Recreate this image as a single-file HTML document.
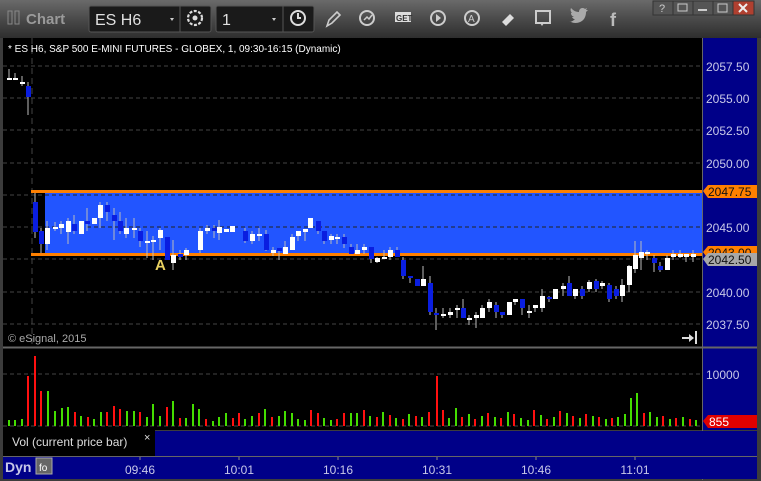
<!DOCTYPE html>
<html><head><meta charset="utf-8"><style>
body{margin:0;width:761px;height:481px;overflow:hidden;background:#3a3a3a;font-family:"Liberation Sans",sans-serif}
svg{display:block}
</style></head><body>
<svg width="761" height="481" xmlns="http://www.w3.org/2000/svg" font-family="Liberation Sans, sans-serif">
<defs><linearGradient id="tb" x1="0" y1="0" x2="0" y2="1"><stop offset="0" stop-color="#6a6a6a"/><stop offset="0.5" stop-color="#4a4a4a"/><stop offset="1" stop-color="#2e2e2e"/></linearGradient></defs>
<rect width="761" height="481" fill="#3c3c3c"/>
<rect x="0" y="0" width="761" height="38" fill="url(#tb)"/>
<rect x="8" y="11" width="4" height="13" fill="none" stroke="#888" stroke-width="1"/>
<rect x="15" y="11" width="4" height="13" fill="none" stroke="#888" stroke-width="1"/>
<text x="26" y="24" font-size="15" font-weight="bold" fill="#9a9a9a">Chart</text>
<rect x="89" y="6" width="122" height="26" rx="2" fill="#1a1a1a" stroke="#555"/>
<line x1="180" y1="6" x2="180" y2="32" stroke="#555"/>
<text x="95" y="25" font-size="16" fill="#e0e0e0">ES H6</text>
<path d="M170 18 l4 0 -2 3z" fill="#ccc"/>
<circle cx="195" cy="18" r="7" fill="none" stroke="#ddd" stroke-width="2.2" stroke-dasharray="3 1.5"/><circle cx="195" cy="18" r="2.5" fill="#ddd"/>
<rect x="216" y="6" width="98" height="26" rx="2" fill="#1a1a1a" stroke="#555"/>
<line x1="283" y1="6" x2="283" y2="32" stroke="#555"/>
<text x="222" y="25" font-size="16" fill="#e0e0e0">1</text>
<path d="M272 18 l4 0 -2 3z" fill="#ccc"/>
<circle cx="298" cy="18" r="7" fill="none" stroke="#ddd" stroke-width="2"/><path d="M298 13v5h3" stroke="#ddd" stroke-width="2" fill="none"/>
<path d="M327 26 l2-6 8-8 3 3 -8 8z" fill="none" stroke="#ccc" stroke-width="1.6"/>
<circle cx="367" cy="18" r="7" fill="none" stroke="#ccc" stroke-width="2"/><path d="M364 20l3-3 2 2 3-4" stroke="#ccc" stroke-width="1.5" fill="none"/>
<rect x="395" y="12" width="16" height="10" fill="#ddd"/><text x="396" y="21" font-size="8" font-weight="bold" fill="#333">GET</text>
<circle cx="438" cy="18" r="7" fill="none" stroke="#ccc" stroke-width="2"/><path d="M436 14v8l5-4z" fill="#ccc"/>
<circle cx="472" cy="18" r="7" fill="none" stroke="#ccc" stroke-width="2"/><text x="468" y="22" font-size="10" fill="#ccc">A</text>
<path d="M502 22 l8-8 4 4 -8 8z" fill="#ddd"/>
<rect x="536" y="11" width="14" height="12" fill="none" stroke="#ccc" stroke-width="2"/><path d="M540 23l2 3 2-3z" fill="#ccc"/>
<path d="M571 22c4 2 10 1 13-3 2-3 2-6 2-7l2-2-2 0 1-2-2 1c-2-2-6-1-6 3-4 0-6-2-8-4-1 2 0 4 1 5h-1c0 2 1 3 3 4h-2c1 2 2 2 3 2-2 2-4 3-6 3z" fill="#aaa"/>
<text x="610" y="26" font-size="18" font-weight="bold" fill="#bbb">f</text>
<rect x="653" y="1" width="20" height="14" fill="#555" stroke="#333"/><text x="659" y="12" font-size="11" fill="#ccc">?</text>
<rect x="673" y="1" width="20" height="14" fill="#555" stroke="#333"/><rect x="678" y="4" width="9" height="7" fill="none" stroke="#ccc"/>
<rect x="693" y="1" width="20" height="14" fill="#555" stroke="#333"/><rect x="698" y="9" width="9" height="2" fill="#ccc"/>
<rect x="713" y="1" width="20" height="14" fill="#555" stroke="#333"/><rect x="718" y="4" width="9" height="8" fill="none" stroke="#ccc"/>
<rect x="733" y="1" width="21" height="14" fill="#b04030" stroke="#333"/><path d="M739 4l8 8M747 4l-8 8" stroke="#eee" stroke-width="2"/>
<rect x="3" y="38" width="699" height="309" fill="#000"/>
<rect x="703" y="38" width="54" height="309" fill="#000088"/>
<line x1="702.5" y1="38" x2="702.5" y2="480" stroke="#666"/>
<g stroke="#444" stroke-dasharray="4 3">
<line x1="3" y1="66" x2="702" y2="66"/><line x1="3" y1="98" x2="702" y2="98"/><line x1="3" y1="130" x2="702" y2="130"/><line x1="3" y1="163" x2="702" y2="163"/><line x1="3" y1="195" x2="702" y2="195"/><line x1="3" y1="227" x2="702" y2="227"/><line x1="3" y1="259" x2="702" y2="259"/><line x1="3" y1="292" x2="702" y2="292"/><line x1="3" y1="324" x2="702" y2="324"/>
<line x1="32" y1="38" x2="32" y2="347" stroke-dasharray="6 4"/>
</g>
<rect x="45" y="193" width="657" height="60" fill="#2255ff"/>
<g stroke="#222" stroke-dasharray="4 3"><line x1="45" y1="195" x2="702" y2="195"/><line x1="45" y1="227" x2="702" y2="227"/></g>
<rect x="31" y="190" width="671" height="3" fill="#ff8000"/>
<rect x="31" y="253" width="671" height="3" fill="#ff8000"/>
<text x="8" y="52" font-size="10" fill="#fff">* ES H6, S&amp;P 500 E-MINI FUTURES - GLOBEX, 1, 09:30-16:15 (Dynamic)</text>
<text x="8" y="342" font-size="11" fill="#aaa">© eSignal, 2015</text>
<path d="M682 337h7v-3l5 4-5 4v-3h-7z M695 331h2v13h-2z" fill="#ddd"/>
<text x="155" y="270" font-size="15" font-weight="bold" fill="#e8d060">A</text>
<g stroke="#bbb" stroke-width="1">
<path d="M9 69V80M15 73V80M22 76V86M28 82V115M35 193V238M41 228V253M47 221V250M55 222V231M61 221V234M68 218V244M74 215V234M81 221V234M87 208V231M94 218V224M100 202V228M107 202V221M114 208V240M120 212V234M126 218V238M134 218V238M140 228V247M147 231V258M153 236V260M160 228V250M167 237V260M173 240V270M180 250V260M186 248V260M200 228V253M207 225V234M214 225V238M219 220V240M226 229V232M232 226V232M245 228V243M252 231V244M259 228V241M266 230V251M273 247V256M279 248V260M285 241V254M292 234V250M298 231V241M305 229V241M310 218V228M318 221V234M324 231V244M331 234V244M337 234V244M344 234V248M351 244V254M357 244V254M364 244V254M371 247V263M377 257V263M384 250V259M390 247V260M397 247V257M403 257V279M410 276V283M417 279V286M423 266V286M430 276V315M436 308V330M443 308V318M450 308V318M457 305V318M463 299V318M469 315V325M476 312V328M482 305V318M489 299V312M496 302V318M502 312V318M509 302V315M515 299V305M522 299V315M529 305V318M535 305V312M542 289V312M549 296V302M555 289V299M563 283V296M569 276V296M575 289V299M582 286V299M589 280V292M596 279V292M602 281V289M609 283V302M616 286V299M622 279V302M629 265V292M635 241V273M641 241V270M647 250V260M654 255V272M660 262V272M667 255V270M673 250V260M680 250V258M686 254V262M693 250V262"/>
</g>
<g fill="#fff">
<rect x="7" y="78" width="5" height="2"/><rect x="13" y="78" width="5" height="2"/><rect x="20" y="82" width="5" height="2"/>
<rect x="45" y="228" width="5" height="16"/><rect x="53" y="227" width="5" height="2"/><rect x="59" y="224" width="5" height="4"/><rect x="66" y="221" width="5" height="11"/><rect x="79" y="221" width="5" height="13"/><rect x="92" y="218" width="5" height="6"/><rect x="98" y="205" width="5" height="13"/><rect x="124" y="228" width="5" height="6"/><rect x="132" y="228" width="5" height="2"/><rect x="145" y="241" width="5" height="2"/><rect x="151" y="240" width="5" height="2"/><rect x="158" y="230" width="5" height="8"/><rect x="171" y="255" width="5" height="8"/><rect x="184" y="250" width="5" height="5"/><rect x="198" y="231" width="5" height="19"/><rect x="205" y="228" width="5" height="3"/><rect x="217" y="227" width="5" height="6"/><rect x="224" y="229" width="5" height="3"/><rect x="230" y="226" width="5" height="6"/>
<rect x="250" y="234" width="5" height="7"/><rect x="257" y="234" width="5" height="2"/><rect x="271" y="250" width="5" height="3"/><rect x="283" y="247" width="5" height="7"/><rect x="290" y="237" width="5" height="13"/><rect x="296" y="231" width="5" height="5"/><rect x="303" y="229" width="5" height="3"/><rect x="308" y="218" width="5" height="10"/><rect x="329" y="236" width="5" height="4"/><rect x="335" y="237" width="5" height="2"/><rect x="355" y="250" width="5" height="4"/><rect x="362" y="247" width="5" height="3"/><rect x="375" y="258" width="5" height="4"/><rect x="382" y="257" width="5" height="2"/><rect x="388" y="250" width="5" height="7"/><rect x="421" y="279" width="5" height="7"/>
<rect x="441" y="314" width="5" height="2"/><rect x="448" y="312" width="5" height="3"/><rect x="455" y="308" width="5" height="2"/><rect x="467" y="318" width="5" height="2"/><rect x="474" y="315" width="5" height="3"/><rect x="480" y="308" width="5" height="10"/><rect x="487" y="302" width="5" height="6"/><rect x="507" y="302" width="5" height="13"/><rect x="513" y="299" width="5" height="3"/><rect x="527" y="311" width="5" height="2"/><rect x="533" y="305" width="5" height="3"/><rect x="540" y="296" width="5" height="12"/><rect x="553" y="289" width="5" height="10"/><rect x="561" y="286" width="5" height="3"/><rect x="573" y="289" width="5" height="7"/><rect x="587" y="282" width="5" height="7"/><rect x="600" y="283" width="5" height="3"/><rect x="620" y="285" width="5" height="11"/><rect x="627" y="266" width="5" height="19"/><rect x="633" y="255" width="5" height="14"/><rect x="639" y="252" width="5" height="6"/><rect x="645" y="252" width="5" height="2"/><rect x="665" y="258" width="5" height="12"/><rect x="671" y="254" width="5" height="3"/><rect x="678" y="254" width="5" height="3"/><rect x="684" y="254" width="5" height="3"/><rect x="691" y="254" width="5" height="3"/>
</g>
<g fill="#0a1ee0">
<rect x="26" y="86" width="5" height="11"/><rect x="33" y="202" width="5" height="30"/><rect x="39" y="231" width="5" height="13"/><rect x="72" y="224" width="5" height="7"/><rect x="85" y="221" width="5" height="3"/><rect x="105" y="205" width="5" height="7"/><rect x="112" y="215" width="5" height="6"/><rect x="118" y="221" width="5" height="10"/><rect x="138" y="231" width="5" height="10"/><rect x="165" y="237" width="5" height="23"/><rect x="178" y="254" width="5" height="3"/><rect x="212" y="228" width="5" height="3"/><rect x="243" y="231" width="5" height="10"/><rect x="264" y="234" width="5" height="16"/><rect x="277" y="248" width="5" height="3"/><rect x="316" y="221" width="5" height="10"/><rect x="322" y="231" width="5" height="10"/><rect x="342" y="237" width="5" height="7"/><rect x="349" y="247" width="5" height="7"/><rect x="369" y="247" width="5" height="12"/><rect x="395" y="250" width="5" height="7"/><rect x="401" y="260" width="5" height="16"/><rect x="408" y="276" width="5" height="2"/><rect x="415" y="279" width="5" height="7"/><rect x="428" y="283" width="5" height="29"/><rect x="434" y="313" width="5" height="2"/><rect x="461" y="308" width="5" height="10"/><rect x="494" y="305" width="5" height="7"/><rect x="500" y="312" width="5" height="3"/><rect x="520" y="299" width="5" height="9"/><rect x="547" y="297" width="5" height="2"/><rect x="567" y="283" width="5" height="13"/><rect x="580" y="289" width="5" height="7"/><rect x="594" y="281" width="5" height="8"/><rect x="607" y="285" width="5" height="14"/><rect x="614" y="289" width="5" height="7"/><rect x="652" y="258" width="5" height="5"/><rect x="658" y="266" width="5" height="4"/>
</g>
<g font-size="12" fill="#c8c8e8">
<text x="706" y="71">2057.50</text><text x="706" y="103">2055.00</text><text x="706" y="135">2052.50</text><text x="706" y="168">2050.00</text><text x="706" y="232">2045.00</text><text x="706" y="297">2040.00</text><text x="706" y="329">2037.50</text>
</g>
<path d="M703 191l5-6h49v13h-49z" fill="#ff8000"/><text x="708" y="196" font-size="12" fill="#111">2047.75</text>
<path d="M703 252l5-6h49v13h-49z" fill="#ff8000"/><text x="708" y="257" font-size="12" fill="#111">2043.00</text>
<path d="M703 259l5-6h49v13h-49z" fill="#a8a8a8"/><text x="708" y="264" font-size="12" fill="#111">2042.50</text>
<rect x="3" y="348" width="699" height="82" fill="#000"/>
<rect x="703" y="348" width="54" height="82" fill="#000088"/>
<line x1="3" y1="347.5" x2="757" y2="347.5" stroke="#666" stroke-width="2"/>
<g stroke="#444" stroke-dasharray="4 3"><line x1="3" y1="374" x2="702" y2="374"/><line x1="3" y1="426" x2="702" y2="426"/></g>
<text x="706" y="379" font-size="12" fill="#c8c8e8">10000</text>
<path d="M703 421l5-6h49v13h-49z" fill="#e00000"/><text x="709" y="426" font-size="12" fill="#fff">855</text>
<g stroke-width="2">
<path stroke="#44dd00" d="M9 426v-6M15 426v-6M22 426v-7M48 426v-35M55 426v-15M62 426v-18M68 426v-19M81 426v-10M94 426v-7M101 426v-14M127 426v-15M134 426v-15M147 426v-9M153 426v-22M160 426v-10M173 426v-25M186 426v-8M193 426v-22M199 426v-17M213 426v-5M219 426v-9M226 426v-13M245 426v-7M252 426v-10M265 426v-17M279 426v-10M285 426v-15M292 426v-13M298 426v-7M305 426v-6M324 426v-8M331 426v-6M351 426v-13M357 426v-13M370 426v-10M383 426v-14M396 426v-8M409 426v-12M422 426v-9M449 426v-8M456 426v-18M469 426v-12M482 426v-10M495 426v-9M508 426v-14M521 426v-8M528 426v-6M541 426v-11M554 426v-9M567 426v-13M580 426v-8M593 426v-10M606 426v-7M618 426v-9M625 426v-12M631 426v-28M637 426v-33M650 426v-14M657 426v-9M670 426v-7M683 426v-9M696 426v-6"/>
<path stroke="#ff1010" d="M28 426v-50M35 426v-70M41 426v-35M75 426v-14M88 426v-9M107 426v-14M114 426v-20M120 426v-17M140 426v-14M167 426v-19M180 426v-8M206 426v-7M233 426v-8M239 426v-13M259 426v-13M272 426v-9M311 426v-16M318 426v-13M337 426v-7M344 426v-13M364 426v-16M377 426v-9M390 426v-11M403 426v-7M416 426v-10M429 426v-14M437 426v-50M443 426v-16M462 426v-9M475 426v-7M488 426v-13M501 426v-8M514 426v-12M534 426v-16M547 426v-7M560 426v-15M573 426v-10M586 426v-12M599 426v-9M612 426v-8M644 426v-13M663 426v-10M676 426v-8M690 426v-7"/>
</g>
<rect x="3" y="430" width="152" height="26" fill="#000"/>
<rect x="155" y="431" width="602" height="25" fill="#000088"/>
<text x="12" y="446" font-size="12" fill="#ddd">Vol (current price bar)</text>
<text x="144" y="441" font-size="11" fill="#ddd">×</text>
<rect x="3" y="456" width="754" height="23" fill="#000088"/>
<line x1="3" y1="456.5" x2="757" y2="456.5" stroke="#666"/>
<text x="5" y="472" font-size="14" font-weight="bold" fill="#c8c8e8">Dyn</text>
<rect x="36" y="458" width="16" height="16" fill="#666" stroke="#aaa"/><text x="39" y="471" font-size="10" fill="#fff">fo</text>
<g stroke="#888"><line x1="140" y1="457" x2="140" y2="460"/><line x1="239" y1="457" x2="239" y2="460"/><line x1="338" y1="457" x2="338" y2="460"/><line x1="437" y1="457" x2="437" y2="460"/><line x1="536" y1="457" x2="536" y2="460"/><line x1="635" y1="457" x2="635" y2="460"/></g>
<g font-size="12" fill="#c8c8e8" text-anchor="middle">
<text x="140" y="474">09:46</text><text x="239" y="474">10:01</text><text x="338" y="474">10:16</text><text x="437" y="474">10:31</text><text x="536" y="474">10:46</text><text x="635" y="474">11:01</text>
</g>
</svg>
</body></html>
